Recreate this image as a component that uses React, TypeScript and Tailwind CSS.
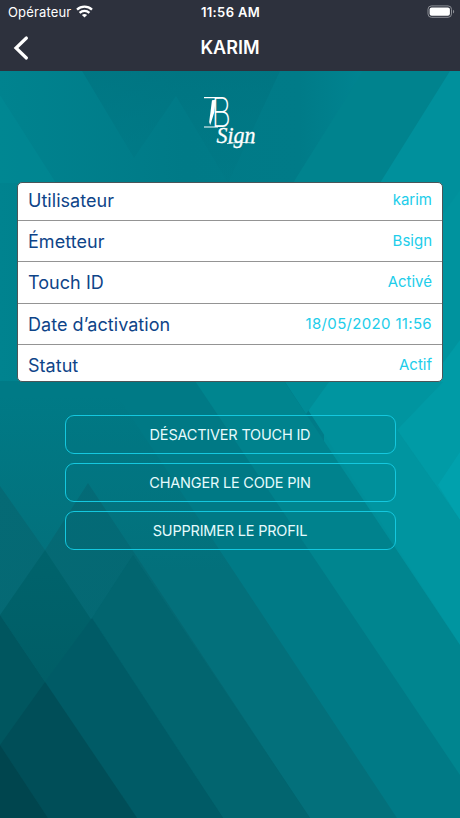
const details = [
  { label: "Utilisateur", value: "karim", row: "h-[38px] pb-0.5" },
  { label: "Émetteur", value: "Bsign", row: "h-[41px]" },
  { label: "Touch ID", value: "Activé", row: "h-[42px]" },
  { label: "Date d’activation", value: "18/05/2020 11:56", row: "h-[41px] tracking-[0.33px]" },
  { label: "Statut", value: "Actif", row: "h-[36px] pt-1" },
];

const actions = ["DÉSACTIVER TOUCH ID", "CHANGER LE CODE PIN", "SUPPRIMER LE PROFIL"];

function WifiIcon() {
  return (
    <svg viewBox="0 0 17 13" className="mb-[3px] h-[13px] w-[17px]" fill="none" stroke="white" strokeWidth="2.3">
      <path d="M1 4.7C5.2.7 11.8.7 16 4.7" />
      <path d="M3.6 7.8c2.8-2.7 7-2.7 9.8 0" />
      <path d="M8.5 12.6 5.9 10c1.5-1.4 3.7-1.4 5.2 0z" fill="white" stroke="none" />
    </svg>
  );
}

function BatteryIcon() {
  return (
    <svg viewBox="0 0 28 13" className="mb-[3px] h-[13px] w-7" fill="none">
      <rect x="1" y=".9" width="23.5" height="11.4" rx="3.4" stroke="#8b8e95" />
      <rect x="2.6" y="2.5" width="20.3" height="8.2" rx="2" fill="white" />
      <path d="M26 4.7c1.6.6 1.6 3.2 0 3.8z" fill="#8b8e95" />
    </svg>
  );
}

function Logo() {
  return (
    <svg viewBox="0 0 56 56" className="h-14 w-14 overflow-visible" fill="none" stroke="white">
      {/* top and bottom rules with the fountain pen */}
      <path d="M2 2.6h15M2 32h14" strokeWidth="1.2" />
      <path d="M10 5.2 13.6 4.8 12.4 17 8.2 30.2 7.2 27z" fill="white" stroke="none" />
      <text x="9.5" y="32.4" fontSize="41" textLength="19.5" lengthAdjust="spacingAndGlyphs" className="font-['Inter'] font-extralight" fill="white" stroke="none">
        B
      </text>
      <text x="14.5" y="48" fontSize="23" textLength="39" lengthAdjust="spacingAndGlyphs" className="font-['Liberation_Serif'] italic" fill="white" stroke="white" strokeWidth=".3">
        Sign
      </text>
      <path d="M25 48.6c9-1.4 18-1.5 27-.5" strokeWidth=".8" />
    </svg>
  );
}

function Background() {
  return (
    <svg viewBox="0 71 460 747" preserveAspectRatio="none" className="absolute inset-0 h-full w-full">
      <defs>
        <linearGradient id="base" x1="0" y1="0" x2="1" y2="0">
          <stop offset="0" stopColor="#00838f" />
          <stop offset=".4" stopColor="#007a87" />
          <stop offset=".65" stopColor="#007b88" />
          <stop offset="1" stopColor="#00929e" />
        </linearGradient>
        <linearGradient id="facet" x1="0" y1="0" x2="0" y2="1">
          <stop offset="0" stopColor="#007380" stopOpacity=".7" />
          <stop offset="1" stopColor="#007784" stopOpacity=".35" />
        </linearGradient>
        <linearGradient id="mist" gradientUnits="userSpaceOnUse" x1="0" y1="395" x2="0" y2="570">
          <stop offset="0" stopColor="#03707b" stopOpacity="0" />
          <stop offset="1" stopColor="#03707b" />
        </linearGradient>
        <linearGradient id="band" x1="0" y1="0" x2="1" y2="1">
          <stop offset="0" stopColor="#056a75" />
          <stop offset="1" stopColor="#036670" />
        </linearGradient>
        <linearGradient id="deep" x1="0" y1="0" x2="0" y2="1">
          <stop offset="0" stopColor="#00636c" />
          <stop offset="1" stopColor="#005860" />
        </linearGradient>
      </defs>
      <rect y="71" width="460" height="747" fill="url(#base)" />
      <path d="M82 71 134 158 176 96 228 183 280 71z" fill="url(#facet)" />
      <path d="M0 95 56 183H0z" fill="#008c97" opacity=".45" />
      <path d="M363 71h97v112H293z" fill="#00838e" />
      <path d="M450 71h10v200h-80v-88z" fill="#00909c" />
      <path d="M460 210 425 265l35 70z" fill="#00a0ad" opacity=".4" />
      {/* right side, lightest to darkest */}
      <path d="M324 382 460 190v628H324z" fill="#00939e" />
      <path d="M397 430 429 382 460 340v180z" fill="#009ba6" />
      <path d="M438 485 460 452v68z" fill="#00a1ad" />
      <path d="M290 382h153L397 430l63 90v125z" fill="#0095a0" />
      <path d="M285 382 306 414 329 382z" fill="#008c97" />
      <path d="M0 381h284l176 264v173H0z" fill="#00858f" />
      <path d="M0 381h195l265 394v43H0z" fill="#007a86" />
      <path d="M0 395h117l280 423H0z" fill="url(#mist)" />
      <path d="M0 486 45 550 88 483 310 818H0z" fill="url(#band)" />
      <path d="M133 555 310 818H223L92 618z" fill="#02656f" />
      <path d="M0 615 45 550 223 818H137z" fill="url(#deep)" />
      <path d="M92 618 223 818H137L45 682z" fill="#005b66" />
      <path d="M0 615 137 818H0z" fill="#00565f" />
      <path d="M45 682 137 818H48L0 745z" fill="#004e58" />
      <path d="M0 745 48 818H0z" fill="#00454e" />
    </svg>
  );
}

export default function App() {
  return (
    <div className="flex h-[818px] w-[460px] flex-col overflow-hidden font-['Inter',sans-serif]">
      <header className="h-[71px] bg-[#2d313d] text-white">
        {/* Status bar */}
        <div className="grid h-[25px] grid-cols-3 items-center pl-2 pr-[5px] text-[13px]">
          <div className="flex items-center gap-[5px]">
            <span className="tracking-[0.15px]">Opérateur</span>
            <WifiIcon />
          </div>
          <span className="-ml-0.5 text-center font-semibold tracking-[0.35px]">11:56 AM</span>
          <div className="flex justify-end">
            <BatteryIcon />
          </div>
        </div>

        {/* Title */}
        <div className="grid h-[45px] grid-cols-[40px_1fr_40px] items-center">
          <button type="button" aria-label="Retour" className="pl-[13px]">
            <svg viewBox="0 0 16 26" className="h-[26px] w-4" fill="none" stroke="white" strokeWidth="3.2" strokeLinecap="round">
              <path d="M13.4 3 3 13l10.4 10" />
            </svg>
          </button>
          <h1 className="text-center text-lg font-semibold">KARIM</h1>
        </div>
      </header>

      <main className="relative flex-1">
        <Background />
        <div className="relative flex flex-col items-center pt-[24px]">
          <Logo />

          <dl className="mt-[31px] w-[426px] overflow-hidden rounded-[5px] border border-[#4b5558] bg-white">
            {details.map((item) => (
              <div
                key={item.label}
                className={`flex items-center justify-between border-b border-[#949494] px-2.5 last:border-b-0 ${item.row}`}
              >
                <dt className="text-[18px] tracking-[0.04px] text-[#0e4488]">{item.label}</dt>
                <dd className="text-[15px] text-[#21cdea]">{item.value}</dd>
              </div>
            ))}
          </dl>

          <div className="mt-[33px] flex w-[331px] flex-col gap-[9px]">
            {actions.map((action) => (
              <button
                key={action}
                type="button"
                className="h-[39px] rounded-[9px] border border-[#14c8df] bg-[#006e80]/15 text-[14.5px] tracking-[-0.2px] text-[#e6fbfd]"
              >
                {action}
              </button>
            ))}
          </div>
        </div>
      </main>
    </div>
  );
}
